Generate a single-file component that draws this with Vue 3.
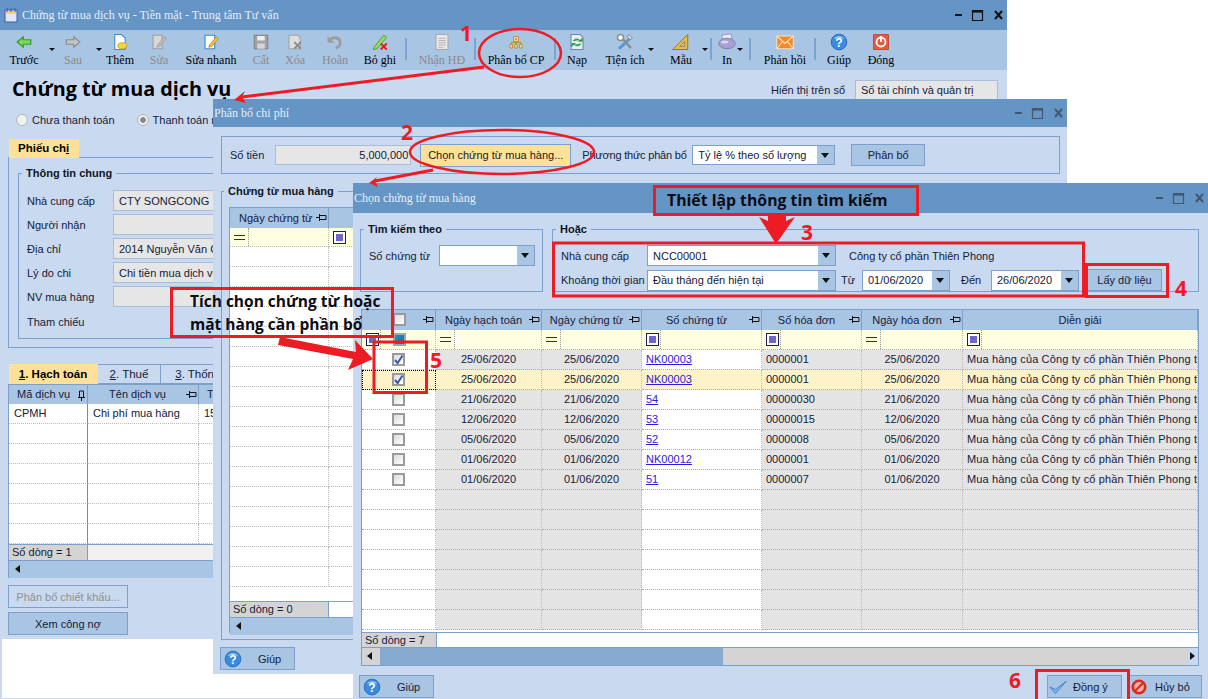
<template>
  <div class="desk">
    <svg class="defs" width="0" height="0">
      <symbol id="i-back" viewBox="0 0 24 24"><path d="M3 12 11 5v4h10v6H11v4z" fill="#7ed957" stroke="#2f9e23" stroke-width="1.6"/></symbol>
      <symbol id="i-next" viewBox="0 0 24 24"><path d="M21 12 13 5v4H3v6h10v4z" fill="#c4c4c4" stroke="#8d8d8d" stroke-width="1.6"/></symbol>
      <symbol id="i-add" viewBox="0 0 24 24"><path d="M5 2h9l5 5v15H5z" fill="#fff" stroke="#3f8fd8" stroke-width="1.5"/><ellipse cx="15" cy="17" rx="6" ry="4" fill="#f4d73c" stroke="#b59a1a"/></symbol>
      <symbol id="i-edit" viewBox="0 0 24 24"><path d="M4 3h12v18H4z" fill="#d8d8d8" stroke="#a0a0a0" stroke-width="1.5"/><path d="m10 16 9-11 3 2-9 11-4 1z" fill="#bcbcbc" stroke="#9a9a9a"/></symbol>
      <symbol id="i-quick" viewBox="0 0 24 24"><path d="M4 3h13v18H4z" fill="#fff" stroke="#3f8fd8" stroke-width="1.6"/><path d="m10 16 9-11 3 2-9 11-4 1z" fill="#f3c33c" stroke="#b8860b"/></symbol>
      <symbol id="i-save" viewBox="0 0 24 24"><path d="M3 3h18v18H3z" fill="#a3a3a3" stroke="#6f6f6f"/><path d="M7 4h10v6H7z" fill="#eee"/><path d="M7 14h10v7H7z" fill="#d6d6d6"/></symbol>
      <symbol id="i-del" viewBox="0 0 24 24"><path d="M4 3h12l3 3v15H4z" fill="#dedede" stroke="#a5a5a5" stroke-width="1.5"/><path d="m11 12 9 9m0-9-9 9" stroke="#8c8c8c" stroke-width="2.4"/></symbol>
      <symbol id="i-undo" viewBox="0 0 24 24"><path d="M5 9c6-5 14-3 14 4 0 4-3 6-6 7" fill="none" stroke="#9c9c9c" stroke-width="3.6"/><path d="M2 4v9h9z" fill="#9c9c9c"/></symbol>
      <symbol id="i-drop" viewBox="0 0 24 24"><path d="m4 19 13-16 4 3L8 21l-5 1z" fill="#98d96a" stroke="#4f9e2c" stroke-width="1.3"/><path d="m13 14 8 8m0-8-8 8" stroke="#e31b1b" stroke-width="2.4"/></symbol>
      <symbol id="i-inv" viewBox="0 0 24 24"><path d="M4 2h16v20H4z" fill="#e8e8e8" stroke="#a9a9a9" stroke-width="1.4"/><path d="M7 7h10M7 10h10M7 13h10M7 16h10M7 19h7" stroke="#a6a6a6"/></symbol>
      <symbol id="i-split" viewBox="-3 -3 30 30"><g fill="#fbe6b8" stroke="#c47f22" stroke-width="1.5"><path d="M8 3h8v8H8zM2 16h4v6H2zM10 16h4v6h-4zM18 16h4v6h-4z"/></g><path d="M12 5v4M10 7h4M4 16v-3h16v3M12 11v5" fill="none" stroke="#c47f22" stroke-width="1.4"/></symbol>
      <symbol id="i-load" viewBox="0 0 24 24"><path d="M4 2h12l4 4v16H4z" fill="#e6eefa" stroke="#6d86ad" stroke-width="1.4"/><path d="M7 11c1-4 7-4 9-1l-2 1h5V7l-2 2M17 14c-1 4-7 4-9 1l2-1H5v4l2-2" fill="#28a835" stroke="#1f8a2a" stroke-width=".8"/></symbol>
      <symbol id="i-tool" viewBox="0 0 24 24"><path d="M4 21 20 6" stroke="#4f9bd8" stroke-width="4"/><path d="M5 4 20 20" stroke="#8c8c8c" stroke-width="3.4"/><circle cx="6" cy="6" r="4" fill="#fff" stroke="#8c8c8c" stroke-width="2"/><path d="m17 2 5 5-3 2-4-4z" fill="#d9d9d9" stroke="#7a7a7a"/></symbol>
      <symbol id="i-ruler" viewBox="0 0 24 24"><path d="M21 2v20H1z" fill="#e9be4d" stroke="#9a7418" stroke-width="1.3"/><path d="M17 11v7h-7z" fill="#a9c5e4" stroke="#9a7418"/></symbol>
      <symbol id="i-print" viewBox="0 0 24 24"><path d="M5 3 17 1l2 7H6z" fill="#eceaf5" stroke="#8b86b5"/><ellipse cx="12" cy="14" rx="11" ry="7" fill="#a7a1d3" stroke="#7872a8"/><ellipse cx="9" cy="12" rx="5" ry="2" fill="#d8d5ee"/></symbol>
      <symbol id="i-mail" viewBox="0 0 24 24"><path d="M1 4h22v17H1z" fill="#f08c2e" stroke="#fff3e0"/><path d="m1 4 11 10L23 4M1 21l8-10M23 21l-8-10" fill="none" stroke="#ffe6c4" stroke-width="1.4"/></symbol>
      <symbol id="i-help" viewBox="0 0 24 24"><circle cx="12" cy="12" r="10.5" fill="#3a8ae0" stroke="#1c5da8"/><path d="M5 8c3-5 11-5 14 0-4-2-10-2-14 0" fill="#a9d2f7"/><text x="12" y="18" text-anchor="middle" font-size="16" font-weight="700" font-family="Liberation Sans, sans-serif" fill="#fff">?</text></symbol>
      <symbol id="i-close" viewBox="0 0 24 24"><path d="M2 2h20v20H2z" fill="#e8583c" stroke="#b93a22"/><circle cx="12" cy="12" r="6" fill="none" stroke="#fff" stroke-width="2.4"/><path d="M12 4v8" stroke="#fff" stroke-width="2.4"/></symbol>
      <symbol id="i-pin" viewBox="0 0 11 9"><path d="M0 4.500h3M3.500 1v7" stroke="#111"/><path d="M3.500 2.500h6.500v4H3.500z" fill="none" stroke="#111"/></symbol>
      <symbol id="i-pinv" viewBox="0 0 9 11"><path d="M4.500 11V8M1 7.500h7" stroke="#111"/><path d="M2.500 1v6.500h4V1z" fill="none" stroke="#111"/></symbol>
      <symbol id="i-ctrl" viewBox="0 0 48 12"><path d="M0 5h7v2H0z"/><path d="M17.500 1.500h10v10h-10z" fill="none" stroke="currentColor" stroke-width="1.200"/><path d="M17 1h11v2.600H17z"/><path d="m40 2 7 8m0-8-7 8" stroke="currentColor" stroke-width="2"/></symbol>
      <symbol id="i-doc" viewBox="0 0 16 16"><path d="M2 3h12v12H2z" fill="#dfe8fb" stroke="#3b5fa8"/><path d="M3 4h10v3H3z" fill="#f4d362"/><path d="M4 1v4M8 1v4M12 1v4" stroke="#3b5fa8"/></symbol>
    </svg>

    <div class="frame"></div>

    <!-- cua so 1: chung tu mua dich vu -->
    <section class="win win1">
      <header class="title">
        <svg class="app-ico" width="16" height="16"><use href="#i-doc"/></svg>
        <span>Chứng từ mua dịch vụ - Tiền mặt - Trung tâm Tư vấn</span>
        <svg class="ctrl" width="48" height="12"><use href="#i-ctrl"/></svg>
      </header>
      <nav class="toolbar">
        <template v-for="t in tools" :key="t.label || t.w">
          <div v-if="t.sep" class="sep-wrap" :style="{ width: t.w + 'px' }"><i class="sep"></i></div>
          <div v-else class="tool" :class="{ off: t.off }" :style="{ width: t.w + 'px' }">
            <svg width="18" height="18"><use :href="'#i-' + t.icon"/></svg>
            <span>{{ t.label }}</span>
            <i v-if="t.drop !== undefined" class="caret" :style="{ right: t.drop + 'px' }"></i>
          </div>
        </template>
      </nav>
      <div class="w1-body">
        <div class="head-row">
          <h1>Chứng từ mua dịch vụ</h1>
          <div class="book">
            <label>Hiển thị trên sổ</label>
            <div class="field book-field">Sổ tài chính và quản trị</div>
          </div>
        </div>
        <div class="radios">
          <label class="radio"><i class="dot"></i>Chưa thanh toán</label>
          <label class="radio"><i class="dot on"></i>Thanh toán ngay</label>
        </div>

        <div class="tabs">
          <span class="tab on">Phiếu ch<u>i</u></span>
        </div>
        <div class="panel">
          <fieldset class="group info">
            <legend>Thông tin chung</legend>
            <div v-for="f in infoFields" :key="f.label" class="info-row">
              <label>{{ f.label }}</label>
              <div v-if="!f.bare" class="field">{{ f.value }}</div>
            </div>
          </fieldset>
        </div>

        <div class="tabs second">
          <span class="tab on w89"><u>1</u>. Hạch toán</span>
          <span class="tab w63"><u>2</u>. Thuế</span>
          <span class="tab w90"><u>3</u>. Thống kê</span>
        </div>
        <div class="grid-box acc">
          <div class="acc-row acc-head">
            <div>Mã dịch vụ<svg class="pin" width="9" height="11"><use href="#i-pinv"/></svg></div>
            <div class="mid">Tên dịch vụ<svg class="pin" width="11" height="9"><use href="#i-pin"/></svg></div>
            <div class="txt-left">TK</div>
          </div>
          <div v-for="n in 7" :key="n" class="acc-row">
            <div>{{ n === 1 ? 'CPMH' : '' }}</div>
            <div>{{ n === 1 ? 'Chi phí mua hàng' : '' }}</div>
            <div>{{ n === 1 ? '154' : '' }}</div>
          </div>
          <div class="acc-foot"><div class="count">Số dòng = 1</div></div>
          <div class="scroll"><i class="arr-l"></i></div>
        </div>
        <button class="btn off wide">Phân bổ chiết khấu...</button>
        <button class="btn wide">Xem công nợ</button>
      </div>
    </section>

    <!-- cua so 2: phan bo chi phi -->
    <section class="win win2">
      <header class="title t28">
        <span>Phân bổ chi phí</span>
        <svg class="ctrl dim" width="48" height="12"><use href="#i-ctrl"/></svg>
      </header>
      <div class="alloc-bar">
        <label>Số tiền</label>
        <div class="field amount">5,000,000</div>
        <button class="btn hot">Chọn chứng từ mua hàng...</button>
        <label class="ml11">Phương thức phân bổ</label>
        <div class="combo c143"><span>Tỷ lệ % theo số lượng</span><i class="combo-btn"></i></div>
        <button class="btn b74">Phân bổ</button>
      </div>
      <fieldset class="group docs">
        <legend>Chứng từ mua hàng</legend>
        <div class="grid-box mini">
          <div class="mini-row mini-head">
            <div>Ngày chứng từ<svg class="pin" width="11" height="9"><use href="#i-pin"/></svg></div>
            <div></div>
          </div>
          <div class="mini-row mini-filter">
            <div><b class="eq"></b></div>
            <div><i class="op"></i></div>
          </div>
          <div v-for="n in 17" :key="n" class="mini-row"><div></div><div></div></div>
          <div class="acc-foot mini-foot"><div class="count">Số dòng = 0</div></div>
          <div class="scroll"><i class="arr-l"></i></div>
        </div>
      </fieldset>
      <button class="btn help b75"><svg width="18" height="18"><use href="#i-help"/></svg><span>Giúp</span></button>
    </section>

    <!-- cua so 3: chon chung tu mua hang -->
    <section class="win win3">
      <header class="title">
        <span>Chọn chứng từ mua hàng</span>
        <svg class="ctrl dim" width="48" height="12"><use href="#i-ctrl"/></svg>
      </header>
      <div class="filters">
        <fieldset class="group by-no">
          <legend>Tìm kiếm theo</legend>
          <div class="line">
            <label class="w70">Số chứng từ</label>
            <div class="combo c96"><span></span><i class="combo-btn"></i></div>
          </div>
        </fieldset>
        <fieldset class="group by-other">
          <legend>Hoặc</legend>
          <div class="other-wrap">
            <div class="line">
              <label class="w86">Nhà cung cấp</label>
              <div class="combo c189"><span>NCC00001</span><i class="combo-btn"></i></div>
              <span class="ml13">Công ty cổ phần Thiên Phong</span>
            </div>
            <div class="line gap3">
              <label class="w86">Khoảng thời gian</label>
              <div class="combo c189"><span>Đầu tháng đến hiện tại</span><i class="combo-btn"></i></div>
              <label class="w26">Từ</label>
              <div class="combo c88"><span>01/06/2020</span><i class="combo-btn"></i></div>
              <label class="w41">Đến</label>
              <div class="combo c88"><span>26/06/2020</span><i class="combo-btn"></i></div>
              <button class="btn b75 get">Lấy dữ liệu</button>
            </div>
          </div>
        </fieldset>
      </div>

      <div class="grid-box pick">
        <div class="pick-row pick-head">
          <div class="center"><i class="chk"></i><svg class="pin" width="11" height="9"><use href="#i-pin"/></svg></div>
          <div v-for="c in pickCols" :key="c">{{ c }}<svg v-if="c !== 'Diễn giải'" class="pin" width="11" height="9"><use href="#i-pin"/></svg></div>
        </div>
        <div class="pick-row pick-filter">
          <div class="first-filter"><i class="op"></i><i class="chk teal"></i></div>
          <div v-for="f in pickFilters" :key="f.id">
            <b v-if="f.eq" class="eq"></b><i v-else class="op"></i>
          </div>
        </div>
        <div v-for="(r, i) in pickRows" :key="i" class="pick-row body" :class="{ sel: i === 1 }">
          <div class="center" :class="{ focus: i === 1 }">
            <i class="chk" :class="{ ticked: r.on }">
              <svg v-if="r.on" width="11" height="11" viewBox="0 0 11 11"><path d="m2 6 2.600 3L9.500 1.500" fill="none" stroke="#3a5aa8" stroke-width="2"/></svg>
            </i>
          </div>
          <div class="g center-text">{{ r.d1 }}</div>
          <div class="g center-text">{{ r.d1 }}</div>
          <div class="link-cell"><a>{{ r.no }}</a></div>
          <div class="g">{{ r.inv }}</div>
          <div class="g center-text">{{ r.d1 }}</div>
          <div class="g clip">Mua hàng của Công ty cổ phần Thiên Phong theo đơn</div>
        </div>
        <div v-for="n in 7" :key="'e' + n" class="pick-row body">
          <div></div><div class="g"></div><div class="g"></div><div></div><div class="g"></div><div class="g"></div><div class="g"></div>
        </div>
        <div class="acc-foot pick-foot"><div class="count">Số dòng = 7</div></div>
        <div class="scroll big"><i class="arr-l"></i><i class="thumb"></i><i class="arr-r"></i></div>
      </div>

      <div class="actions">
        <button class="btn help b75"><svg width="18" height="18"><use href="#i-help"/></svg><span>Giúp</span></button>
        <button class="btn ok"><svg width="18" height="16" viewBox="0 0 22 18"><path d="M1 9l7 8L21 2 8 12z" fill="#7fb2e8" stroke="#3b78c4"/></svg><span>Đồng ý</span></button>
        <button class="btn cancel"><svg width="16" height="16" viewBox="0 0 18 18"><circle cx="9" cy="9" r="7" fill="#f2b0a8" stroke="#d92a1c" stroke-width="3"/><path d="m4 14 10-10" stroke="#d92a1c" stroke-width="2.400"/></svg><span>Hủy bỏ</span></button>
      </div>
    </section>

    <!-- chu thich mau do de len tren cac cua so -->
    <svg class="marks" width="1208" height="699" viewBox="0 0 1208 699">
      <ellipse cx="520" cy="53" rx="41" ry="24" class="ln"/>
      <ellipse cx="502" cy="152" rx="92" ry="22" class="ln"/>
      <path d="M484 67 242 97" class="ln w3"/>
      <path d="M234 100 245 91 242 97 246 103z" class="fl"/>
      <path d="M433 170 375 181" class="ln w3"/>
      <path d="M369 183 377 177 375 181 378 187z" class="fl"/>
      <path d="M759 217 768 221V216H786V221L795 217 776 244z" class="fl"/>
      <rect x="553.500" y="243" width="530" height="53" class="ln w3"/>
      <rect x="1086.500" y="264.500" width="81" height="32" class="ln w3"/>
      <rect x="374" y="342" width="52.500" height="50.500" class="ln w3"/>
      <rect x="1036.500" y="670.500" width="92" height="30" class="ln w3"/>
      <path d="M280 337 356 352 355 340 373 359 348 370 353 359 278 345z" class="fl"/>
      <text x="460" y="41" class="num">1</text>
      <text x="401" y="140" class="num">2</text>
      <text x="801" y="240" class="num">3</text>
      <text x="1175" y="296" class="num">4</text>
      <text x="430" y="368" class="num">5</text>
      <text x="1009" y="688" class="num">6</text>
    </svg>
    <div class="note top">Thiết lập thông tin tìm kiếm</div>
    <div class="note side">Tích chọn chứng từ hoặc<br/>mặt hàng cần phần bổ</div>
  </div>
</template>

<script setup>
const tools = [
  { label: 'Trước', w: 40, icon: 'back', drop: -11 },
  { label: 'Sau', w: 58, icon: 'next', off: true, drop: 0 },
  { label: 'Thêm', w: 36, icon: 'add' },
  { label: 'Sửa', w: 42, icon: 'edit', off: true },
  { label: 'Sửa nhanh', w: 62, icon: 'quick' },
  { label: 'Cất', w: 38, icon: 'save', off: true },
  { label: 'Xóa', w: 30, icon: 'del', off: true },
  { label: 'Hoãn', w: 50, icon: 'undo', off: true },
  { label: 'Bỏ ghi', w: 40, icon: 'drop' },
  { sep: true, w: 12 },
  { label: 'Nhận HĐ', w: 60, icon: 'inv', off: true },
  { sep: true, w: 6 },
  { label: 'Phân bổ CP', w: 76, icon: 'split' },
  { sep: true, w: 2 },
  { label: 'Nạp', w: 42, icon: 'load' },
  { label: 'Tiện ích', w: 54, icon: 'tool', drop: -2 },
  { label: 'Mẫu', w: 58, icon: 'ruler', drop: 2 },
  { sep: true, w: 2 },
  { label: 'In', w: 30, icon: 'print', drop: -1 },
  { sep: true, w: 16 },
  { label: 'Phản hồi', w: 54, icon: 'mail' },
  { sep: true, w: 6 },
  { label: 'Giúp', w: 42, icon: 'help' },
  { label: 'Đóng', w: 42, icon: 'close' }
]

const infoFields = [
  { label: 'Nhà cung cấp', value: 'CTY SONGCONG' },
  { label: 'Người nhận', value: '' },
  { label: 'Địa chỉ', value: '2014 Nguyễn Văn Cừ' },
  { label: 'Lý do chi', value: 'Chi tiền mua dịch vụ' },
  { label: 'NV mua hàng', value: '' },
  { label: 'Tham chiếu', bare: true }
]

const pickCols = ['Ngày hạch toán', 'Ngày chứng từ', 'Số chứng từ', 'Số hóa đơn', 'Ngày hóa đơn', 'Diễn giải']

const pickFilters = [
  { id: 1, eq: true },
  { id: 2, eq: true },
  { id: 3 },
  { id: 4 },
  { id: 5, eq: true },
  { id: 6 }
]

const pickRows = [
  { on: true, d1: '25/06/2020', no: 'NK00003', inv: '0000001' },
  { on: true, d1: '25/06/2020', no: 'NK00003', inv: '0000001' },
  { d1: '21/06/2020', no: '54', inv: '00000030' },
  { d1: '12/06/2020', no: '53', inv: '00000015' },
  { d1: '05/06/2020', no: '52', inv: '0000008' },
  { d1: '01/06/2020', no: 'NK00012', inv: '0000001' },
  { d1: '01/06/2020', no: '51', inv: '0000007' }
]
</script>

<style>
html, body { margin: 0; background: #fff; }
</style>

<style scoped>
.desk {
  position: relative;
  width: 1208px;
  height: 699px;
  overflow: hidden;
  background: #fff;
  font: 11px "Liberation Sans", Arial, sans-serif;
  color: #14203a;
}
.defs { position: absolute; }
.frame {
  position: absolute;
  inset: 0;
  border-left: 2px solid #c9daf0;
  border-bottom: 1px solid #c9daf0;
}
.win { position: absolute; background: #c9daf0; overflow: hidden; }
.win1 { left: 0; top: 0; width: 1007px; height: 639px; }
.win2 { left: 213px; top: 99px; width: 854px; height: 575px; }
.win3 { left: 353px; top: 183px; width: 855px; height: 516px; }

.title {
  height: 30px;
  display: flex;
  align-items: center;
  background: #6495c5;
  color: #e6eef8;
  font: 12px "Liberation Serif", serif;
  padding: 0 4px 0 1px;
  box-sizing: border-box;
}
.t28 { height: 28px; }
.app-ico { margin: 0 3px 0 2px; }
.ctrl { margin-left: auto; color: #111; fill: currentColor; }
.ctrl.dim { color: #47566a; }

.toolbar {
  height: 40px;
  display: flex;
  padding-left: 4px;
  background: #a9c5e4;
  font: 12px "Liberation Serif", serif;
  color: #000;
}
.tool {
  position: relative;
  display: flex;
  flex-direction: column;
  align-items: center;
  padding-top: 3px;
  white-space: nowrap;
  flex: none;
}
.tool span { margin-top: 2px; }
.tool.off { color: #8a8a8a; }
.caret {
  position: absolute;
  top: 18px;
  border: 3px solid transparent;
  border-top: 3px solid #111;
}
.sep-wrap { display: flex; justify-content: center; flex: none; }
.sep { width: 2px; height: 22px; margin-top: 8px; background: #7fa3cf; }

.w1-body { padding: 0 8px; }
.head-row {
  height: 36px;
  display: flex;
  align-items: center;
  justify-content: space-between;
}
h1 {
  margin: 0 0 0 4px;
  font: 700 19.800px "Open Sans", sans-serif;
  color: #000;
}
.book { display: flex; align-items: center; gap: 10px; margin: 4px 1px 0 0; }
.field.book-field { width: 143px; height: 20px; }

.radios { display: flex; height: 20px; align-items: center; padding: 4px 0 0 8px; }
.radio { display: flex; align-items: center; gap: 4px; margin-right: 22px; white-space: nowrap; }
.dot {
  width: 10px;
  height: 10px;
  border: 1px solid #b5b5b5;
  border-radius: 50%;
  background: #f1f1f1;
}
.dot.on { background: radial-gradient(#888 35%, #eee 45%); }

.tabs { display: flex; height: 19px; margin: 9px 0 0 1px; font-size: 11.500px; }
.tab {
  height: 19px;
  box-sizing: border-box;
  border: 1px solid #7c9fcb;
  border-left: 0;
  display: block;
  text-align: center;
  line-height: 17px;
  white-space: nowrap;
  padding: 0 8px;
}
.tab.on { background: #fde19a; font-weight: 700; color: #000; border-color: #fde19a; padding: 0 9px; }
.second { margin: 16px 0 0 1px; height: 20px; }
.second .tab { height: 20px; line-height: 18px; }
.w89 { width: 89px; }
.w63 { width: 63px; }
.w90 { width: 90px; }

.panel {
  height: 191px;
  border: 1px solid #7c9fcb;
  box-sizing: border-box;
  margin-top: -1px;
  padding: 8px 9px;
}
.group {
  margin: 0;
  border: 1px solid #7c9fcb;
  padding: 0;
  min-width: 0;
}
.group legend {
  margin-left: -5px;
  padding: 0 4px;
  font-weight: 700;
  color: #10151f;
  font-size: 11px;
  line-height: 14px;
  white-space: nowrap;
}
.info { height: 173px; padding: 10px 0 0 8px; box-sizing: border-box; }
.info-row { display: flex; align-items: center; height: 21px; margin-bottom: 3px; }
.info-row label { width: 86px; flex: none; }
.info-row:last-child { margin-top: 4px; }
.field {
  box-sizing: border-box;
  height: 21px;
  width: 160px;
  border: 1px solid #a7bdd9;
  background: #e6e6e6;
  display: flex;
  align-items: center;
  padding-left: 5px;
  white-space: nowrap;
  overflow: hidden;
  font-size: 11px;
}

.grid-box { border: 1px solid #7c9fcb; box-sizing: border-box; background: #fff; }
.acc { height: 194px; margin-top: 0; background: #fff; }
.acc-row {
  display: grid;
  grid-template-columns: 79px 111px 1fr;
  height: 20px;
}
.acc-row > div {
  box-sizing: border-box;
  border-bottom: 1px dotted #bbb;
  border-right: 1px dotted #bbb;
  padding: 3px 5px;
  white-space: nowrap;
  position: relative;
}
.acc-row > div:first-child { border-right: 1px solid #888; }
.acc-head { height: 19px; background: #a9c5e4; }
.acc-head > div,
.acc-head > div:first-child { border: 0; border-right: 1px solid #7c9fcb; text-align: left; padding: 3px 8px; }
.acc-head .mid { text-align: center; padding: 3px 11px 3px 0; }
.pin { position: absolute; right: 1px; top: 5px; }
.acc-foot {
  height: 17px;
  background: #f0f0f0;
  border-top: 1px solid #7c9fcb;
  border-bottom: 1px solid #7c9fcb;
  box-sizing: border-box;
  display: flex;
}
.count {
  background: #d4d4d4;
  width: 79px;
  box-sizing: border-box;
  padding: 1px 3px;
  border-right: 1px solid #7c9fcb;
  white-space: nowrap;
}
.scroll {
  position: relative;
  height: 17px;
  background: #a9c5e4;
}
.arr-l, .arr-r {
  position: absolute;
  top: 4px;
  border: 4px solid transparent;
  border-right: 5px solid #111;
  border-left: 0;
  left: 6px;
}

.btn {
  display: flex;
  align-items: center;
  justify-content: center;
  box-sizing: border-box;
  border: 1px solid #7c9fcb;
  background: #a9c5e4;
  font: 11px "Liberation Sans", Arial, sans-serif;
  color: #14203a;
  padding: 0;
  height: 23px;
  flex: none;
}
.btn.off { background: #c9daf0; color: #8f8f8f; }
.wide { width: 120px; margin-top: 4px; }
.btn.off.wide { margin-top: 7px; }
.hot { background: #fde19a; width: 151px; margin-left: 9px; color: #1a1a1a; }
.b74 { width: 74px; margin-left: 16px; height: 22px; }
.b75 { width: 75px; }

.alloc-bar {
  height: 38px;
  margin: 9px 7px 0 8px;
  border: 1px solid #7c9fcb;
  box-sizing: border-box;
  display: flex;
  align-items: center;
  padding-left: 8px;
}
.amount {
  width: 136px;
  height: 20px;
  margin-left: 11px;
  justify-content: flex-end;
  padding-right: 2px;
}
.ml11 { margin-left: 11px; width: 104px; white-space: nowrap; flex: none; letter-spacing: -.2px; }
.combo {
  position: relative;
  box-sizing: border-box;
  height: 21px;
  border: 1px solid #7c9fcb;
  background: #fff;
  display: flex;
  align-items: center;
  padding-left: 5px;
  flex: none;
  font-size: 11px;
  white-space: nowrap;
}
.combo-btn {
  position: absolute;
  top: 0;
  right: 0;
  bottom: 0;
  width: 17px;
  background: #a9c5e4;
}
.combo-btn::after {
  content: "";
  position: absolute;
  top: 7px;
  left: 4px;
  border: 4px solid transparent;
  border-top: 5px solid #111;
  border-bottom: 0;
}
.c143 { width: 143px; margin-left: 6px; height: 20px; }
.c96 { width: 96px; }
.c189 { width: 189px; }
.c88 { width: 88px; }

.docs { margin: 10px 7px 0 8px; height: 456px; box-sizing: border-box; padding: 9px 0 0 7px; }
.mini { width: 700px; height: 426px; }
.mini-row { display: grid; grid-template-columns: 99px 1fr; height: 20px; }
.mini-row > div {
  box-sizing: border-box;
  border-bottom: 1px dotted #bbb;
  border-right: 1px dotted #bbb;
  position: relative;
}
.mini-head { background: #a9c5e4; height: 20px; }
.mini-head > div { border: 0; border-right: 1px solid #7c9fcb; padding: 3px 9px; white-space: nowrap; line-height: 14px; }
.mini-filter { background: #fefee0; height: 19px; }
.mini-filter > div:first-child::after {
  content: "";
  position: absolute;
  left: 18px;
  top: 0;
  bottom: 0;
  border-left: 1px dotted #999;
}
.mini-foot { background: #fff; height: 17px; margin-top: 14px; }
.mini-foot .count { width: 99px; }

.eq {
  display: block;
  width: 11px;
  height: 3px;
  margin: 7px 0 0 4px;
  border-top: 1px solid #2b2a80;
  border-bottom: 1px solid #2b2a80;
}
.op {
  display: block;
  width: 11px;
  height: 11px;
  border: 1px solid #1e1e5a;
  background: #fff;
  position: relative;
  margin: 3px 0 0 4px;
}
.op::after {
  content: "";
  position: absolute;
  inset: 2px;
  background: #6a66cc;
}
.help { justify-content: flex-start; padding-left: 3px; margin: 7px 0 0 7px; }
.help span { margin-left: 16px; }

.filters { display: flex; padding: 9px 9px 0 7px; gap: 9px; height: 75px; box-sizing: border-box; }
.by-no { width: 183px; height: 70px; box-sizing: border-box; padding: 9px 0 0 8px; flex: none; }
.by-other { width: 647px; height: 70px; box-sizing: border-box; padding: 9px 0 0 8px; flex: none; }
.line { display: flex; align-items: center; white-space: nowrap; }
.gap3 { margin-top: 3px; }
.w70 { width: 70px; flex: none; }
.w86 { width: 86px; flex: none; }
.w26 { width: 21px; margin-left: 5px; flex: none; }
.w41 { width: 30px; margin-left: 11px; flex: none; }
.ml13 { margin-left: 13px; font-size: 11px; }
.get { margin-left: 8px; height: 22px; }

.pick { width: 838px; margin: 21px 0 0 8px; height: 357px; }
.pick-row {
  display: grid;
  grid-template-columns: 74px 106px 100px 120px 100px 101px 1fr;
  height: 20px;
}
.pick-row > div {
  box-sizing: border-box;
  border-bottom: 1px dotted #aaa;
  border-right: 1px dotted #bbb;
  position: relative;
  white-space: nowrap;
  overflow: hidden;
  line-height: 19px;
  padding: 0 4px;
}
.pick-head { background: #a9c5e4; }
.pick-head > div {
  border: 0;
  border-right: 1px solid #7c9fcb;
  text-align: center;
  line-height: 20px;
  padding: 0 10px 0 0;
  font-size: 11px;
}
.pick-head > div:first-child, .pick-head > div:last-child { padding: 0; }
.pick-filter { background: #fefee0; }
.pick-filter > div { padding: 0; }
.pick-filter > div::after {
  content: "";
  position: absolute;
  left: 18px;
  top: 0;
  bottom: 0;
  border-left: 1px dotted #999;
}
.first-filter .chk { position: absolute; left: 31px; top: 3px; margin: 0; }
.chk {
  display: inline-flex;
  align-items: center;
  justify-content: center;
  box-sizing: border-box;
  width: 13px;
  height: 13px;
  border: 2px solid #9a9a9a;
  background: linear-gradient(135deg, #dcdcdc, #fff);
}
.chk.teal { background: linear-gradient(135deg, #1a9ab8, #2a5fa8); border-color: #9aa; }
.chk svg { flex: none; }
.center { display: flex; align-items: center; justify-content: center; }
.center.focus { outline: 1px dotted #000; outline-offset: -1px; }
.center-text { text-align: center; }
.pick-head .chk { position: absolute; left: 31px; top: 3px; }
.body { background: #fff; }
.body .g { background: #e4e4e4; }
.body.sel > div, .body.sel .g { background: #fdf2c8; }
.link-cell a { color: #2c1ae0; text-decoration: underline; }
.clip { text-overflow: clip; letter-spacing: .14px; }
.pick-foot { background: #fff; height: 16px; margin-top: 2px; }
.pick-foot .count { width: 75px; }
.big { background: #d4d4d4; height: 17px; }
.thumb {
  position: absolute;
  left: 18px;
  top: 0;
  bottom: 0;
  width: 343px;
  background: #86aad0;
}
.big .arr-l { left: 5px; }
.big .arr-r {
  left: auto;
  right: 3px;
  border-right: 0;
  border-left: 5px solid #111;
}
.big::after {
  content: "";
  position: absolute;
  right: 0;
  top: 0;
  bottom: 0;
  width: 10px;
  background: #c9daf0;
  z-index: 0;
}
.big .arr-r { z-index: 1; }

.actions { display: flex; align-items: center; padding: 9px 6px 0 0; }
.actions .help { margin: 0 0 0 6px; }
.ok {
  margin-left: auto;
  width: 75px;
  gap: 6px;
  justify-content: flex-start;
  padding-left: 1px;
  color: #14203a;
}
.cancel {
  width: 74px;
  margin-left: 6px;
  gap: 8px;
  justify-content: flex-start;
  padding-left: 2px;
}

.marks { position: absolute; left: 0; top: 0; pointer-events: none; }
.ln { fill: none; stroke: #ed1c24; stroke-width: 2.500; }
.w3 { stroke-width: 3; }
.fl { fill: #ed1c24; }
.num { fill: #ed1c24; font: 700 21px "Open Sans", sans-serif; }
.note {
  position: absolute;
  box-sizing: border-box;
  border: 3px solid #ed1c24;
  color: #0c0c14;
  font: 700 15.800px "Open Sans", sans-serif;
  text-align: left;
  white-space: nowrap;
}
.note.top { left: 653px; top: 185px; width: 266px; height: 31px; line-height: 25px; padding-left: 11px; }
.note.side { left: 170px; top: 287px; width: 224px; height: 51px; line-height: 23px; padding: 0 0 0 17px; font-size: 15.500px; }
</style>
